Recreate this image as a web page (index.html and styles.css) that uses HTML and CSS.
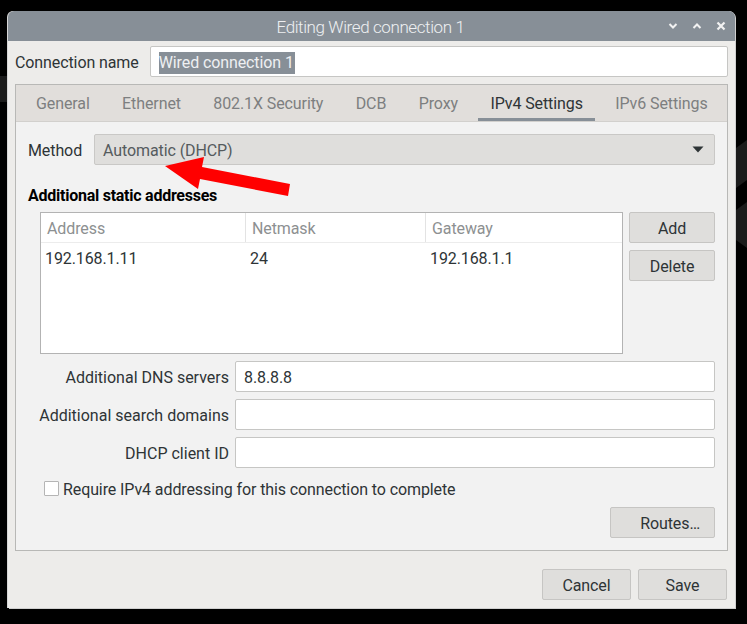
FILE: index.html
```html
<!DOCTYPE html>
<html>
<head>
<meta charset="utf-8">
<link rel="stylesheet" href="styles.css">
</head>
<body>
<div class="desktop">
  <svg class="wallpaper" width="747" height="624" viewBox="0 0 747 624">
    <rect x="0" y="76" width="10" height="26" fill="#1b1b1b"/>
    <polygon points="747,140 736,148 736,188 747,180" fill="#1b1b1b"/>
    <polygon points="736,210 747,202 747,248 736,240" fill="#1b1b1b"/>
  </svg>

  <div class="window">
    <div class="titlebar">
      <span class="title">Editing Wired connection 1</span>
      <div class="wm-buttons">
        <svg width="10" height="8" viewBox="0 0 10 8"><path d="M1.5 2 L5 5.5 L8.5 2" fill="none" stroke="#f2f2f2" stroke-width="2"/></svg>
        <svg width="10" height="8" viewBox="0 0 10 8"><path d="M1.5 6 L5 2.5 L8.5 6" fill="none" stroke="#f2f2f2" stroke-width="2"/></svg>
        <svg width="10" height="10" viewBox="0 0 10 10"><path d="M1.5 1.5 L8.5 8.5 M8.5 1.5 L1.5 8.5" fill="none" stroke="#f2f2f2" stroke-width="2.2"/></svg>
      </div>
    </div>

    <div class="body">
      <div class="name-row">
        <span class="label">Connection name</span>
        <div class="entry name-entry"><span class="sel">Wired connection 1</span></div>
      </div>

      <div class="notebook">
        <div class="tabs">
          <span class="tab">General</span>
          <span class="tab">Ethernet</span>
          <span class="tab">802.1X Security</span>
          <span class="tab">DCB</span>
          <span class="tab">Proxy</span>
          <span class="tab active">IPv4 Settings</span>
          <span class="tab">IPv6 Settings</span>
        </div>
        <div class="page">
          <div class="method-row">
            <span class="label">Method</span>
            <div class="combo">
              <span>Automatic (DHCP)</span>
              <svg width="12" height="7" viewBox="0 0 12 7"><polygon points="0.5,0.5 11.5,0.5 6,6.5" fill="#2e3436"/></svg>
            </div>
          </div>

          <div class="section-title">Additional static addresses</div>

          <div class="addr-row">
            <div class="table">
              <div class="thead">
                <div class="th c1">Address</div>
                <div class="th c2">Netmask</div>
                <div class="th c3">Gateway</div>
              </div>
              <div class="tr">
                <div class="td c1">192.168.1.11</div>
                <div class="td c2">24</div>
                <div class="td c3">192.168.1.1</div>
              </div>
            </div>
            <div class="side-buttons">
              <div class="btn">Add</div>
              <div class="btn">Delete</div>
            </div>
          </div>

          <div class="form-grid">
            <span class="flabel">Additional DNS servers</span>
            <div class="entry">8.8.8.8</div>
            <span class="flabel">Additional search domains</span>
            <div class="entry"></div>
            <span class="flabel">DHCP client ID</span>
            <div class="entry"></div>
          </div>

          <div class="check-row">
            <span class="checkbox"></span>
            <span class="check-text">Require IPv4 addressing for this connection to complete</span>
          </div>

          <div class="routes-row">
            <div class="btn routes">Routes…</div>
          </div>
        </div>
      </div>

      <div class="actions">
        <div class="btn action">Cancel</div>
        <div class="btn action">Save</div>
      </div>
    </div>
  </div>

  <svg class="annotation" width="747" height="624" viewBox="0 0 747 624">
    <polygon points="165,166 204,157 202,167 290,184 288,196 200,179 198,189" fill="#ff0000"/>
  </svg>
</div>
</body>
</html>
```

FILE: styles.css
```css
* { box-sizing: border-box; }

html, body {
  margin: 0;
  padding: 0;
  background: #000;
}

body {
  font-family: Roboto, "Liberation Sans", sans-serif;
  font-size: 16px;
  letter-spacing: -0.1px;
  color: #2e3436;
}

.desktop {
  position: relative;
  width: 747px;
  height: 624px;
  overflow: hidden;
  background: #000;
}

.wallpaper {
  position: absolute;
  left: 0;
  top: 0;
}

.annotation {
  position: absolute;
  left: 0;
  top: 0;
  pointer-events: none;
}

.window {
  position: absolute;
  left: 8px;
  top: 11px;
  width: 727px;
  height: 597px;
  display: flex;
  flex-direction: column;
  background: #edecea;
  border-radius: 6px 6px 0 0;
  box-shadow: 1px 1px 0 #cfcfcf, -1px 0 0 #d6d6d6;
}

.titlebar {
  position: relative;
  height: 30px;
  flex: none;
  background: #878f97;
  border-radius: 6px 6px 0 0;
  display: flex;
  align-items: center;
  justify-content: center;
  padding-top: 2px;
}

.title {
  color: #eef0f2;
  font-size: 17px;
  letter-spacing: -0.4px;
  font-weight: 300;
  margin-left: -2px;
}

.wm-buttons {
  position: absolute;
  right: 9px;
  top: 0;
  height: 30px;
  display: flex;
  align-items: center;
  gap: 14px;
}

.body {
  flex: 1;
  display: flex;
  flex-direction: column;
  padding: 5px 7px 7px 7px;
}

.name-row {
  display: flex;
  align-items: center;
  gap: 11px;
  height: 31px;
}

.label {
  white-space: nowrap;
  padding-top: 2px;
}

.entry {
  height: 31px;
  background: #fff;
  border: 1px solid #c6c6c4;
  border-radius: 2px;
  display: flex;
  align-items: center;
  padding-left: 8px;
  padding-top: 2px;
}

.name-entry {
  flex: 1;
}

.sel {
  background: #878f97;
  color: #eef0f2;
  line-height: 22px;
  padding-right: 1px;
}

.notebook {
  margin-top: 7px;
  height: 467px;
  border: 1px solid #b8b8b6;
  display: flex;
  flex-direction: column;
}

.tabs {
  height: 37px;
  flex: none;
  background: #e1dedb;
  border-bottom: 1px solid #d2d0cd;
  display: flex;
  align-items: stretch;
  padding-left: 8px;
  gap: 8.4px;
}

.tab {
  padding: 4px 12px 0 12px;
  display: flex;
  align-items: center;
  color: #7d7f80;
  border-bottom: 3px solid transparent;
}

.tab.active {
  color: #2e3436;
  border-bottom-color: #878f97;
}

.page {
  flex: 1;
  background: #f2f2f2;
  padding: 12px 12px 11px 12px;
  display: flex;
  flex-direction: column;
}

.method-row {
  display: flex;
  align-items: center;
  gap: 12px;
  height: 31px;
}

.combo {
  flex: 1;
  height: 31px;
  background: #dfdedc;
  border: 1px solid #c9c8c6;
  border-radius: 2px;
  display: flex;
  align-items: center;
  justify-content: space-between;
  padding: 0 10px 0 8px;
  color: #555b5e;
}

.combo span {
  padding-top: 2px;
}

.section-title {
  margin-top: 21px;
  font-weight: bold;
  line-height: 20px;
  color: #000;
  letter-spacing: -0.25px;
  margin-bottom: -1px;
}

.addr-row {
  margin-top: 7px;
  margin-left: 12px;
  display: flex;
  gap: 6px;
  height: 142px;
}

.table {
  width: 584px;
  background: #fff;
  border: 1px solid #b3b3b3;
}

.thead {
  display: flex;
  height: 30px;
  border-bottom: 1px solid #ececec;
}

.th {
  color: #8d9091;
  display: flex;
  align-items: center;
  padding-left: 6px;
  padding-top: 2px;
  border-right: 1px solid #e3e3e3;
}

.th.c3 {
  border-right: none;
}

.c1 { width: 205px; }
.c2 { width: 180px; }
.c3 { flex: 1; }

.tr {
  display: flex;
  height: 28px;
}

.td {
  display: flex;
  align-items: center;
  padding-left: 4px;
  padding-top: 2px;
}

.side-buttons {
  width: 86px;
  display: flex;
  flex-direction: column;
  gap: 7px;
}

.btn {
  height: 31px;
  background: #dfdedc;
  border: 1px solid #c6c5c3;
  border-radius: 2px;
  display: flex;
  align-items: center;
  justify-content: center;
  padding-top: 2px;
  color: #2e3436;
}

.form-grid {
  margin-top: 7px;
  display: grid;
  grid-template-columns: 201px 1fr;
  column-gap: 6px;
  row-gap: 7px;
}

.flabel {
  text-align: right;
  align-self: center;
  white-space: nowrap;
  padding-top: 2px;
  letter-spacing: 0;
}

.form-grid .entry {
  height: 31px;
}

.check-row {
  margin-top: 10px;
  margin-left: 16px;
  display: flex;
  align-items: center;
  gap: 4px;
  height: 20px;
}

.check-text {
  padding-top: 2px;
}

.checkbox {
  width: 15px;
  height: 15px;
  background: #fff;
  border: 1px solid #b5b5b5;
  border-radius: 1px;
}

.routes-row {
  margin-top: 9px;
  display: flex;
  justify-content: flex-end;
}

.routes {
  width: 105px;
  justify-content: flex-end;
  padding-right: 14px;
}

.actions {
  margin-top: 18px;
  display: flex;
  justify-content: flex-end;
  gap: 7px;
  padding-right: 1px;
}

.action {
  width: 89px;
}
```
